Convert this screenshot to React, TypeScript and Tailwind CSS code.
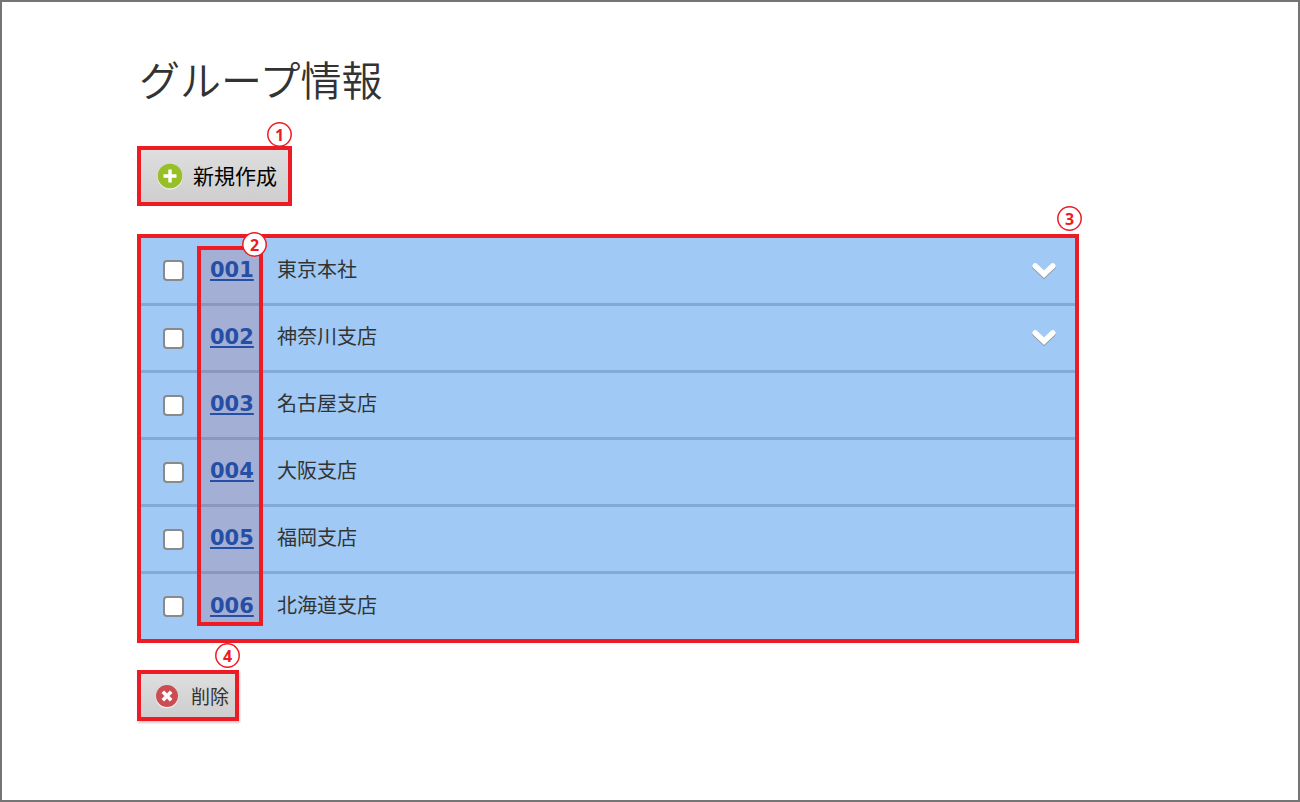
import React from 'react'

type Group = {
    code: string;
    name: string;
    hasChildren?: boolean;
}

const groups: Group[] = [
    { code: '001', name: '東京本社', hasChildren: true },
    { code: '002', name: '神奈川支店', hasChildren: true },
    { code: '003', name: '名古屋支店' },
    { code: '004', name: '大阪支店' },
    { code: '005', name: '福岡支店' },
    { code: '006', name: '北海道支店' },
]

type MarkerProps = {
    label: string;
    className: string;
}

function Marker({ label, className }: MarkerProps) {
    return (
        <span
            className={`absolute grid size-[25px] place-items-center font-['Open_Sans','Noto_Sans',sans-serif] text-base leading-none font-bold text-[#ed1c24] ${className}`}
        >
            <svg viewBox="0 0 25 25" className="col-start-1 row-start-1 size-[25px]" aria-hidden="true">
                <circle cx="12.5" cy="12.5" r="11.7" fill="#fff" stroke="#ed1c24" strokeWidth="1.5" />
            </svg>
            <span className="col-start-1 row-start-1">{label}</span>
        </span>
    )
}

function PlusIcon() {
    return (
        <svg viewBox="0 0 26 28" className="h-7 w-[26px]" aria-hidden="true">
            <circle cx="13" cy="15" r="12.5" fill="#f4f4f4" />
            <circle cx="13" cy="14" r="12.3" fill="#97bf26" />
            <path d="M13 7.5v13M6.5 14h13" stroke="#fff" strokeWidth="3.4" />
        </svg>
    )
}

function DeleteIcon() {
    return (
        <svg viewBox="0 0 24 26" className="h-[26px] w-6" aria-hidden="true">
            <circle cx="12" cy="14" r="11.3" fill="#f4f4f4" />
            <circle cx="12" cy="13" r="11" fill="#cb4d52" />
            <path d="M7.8 8.8l8.4 8.4M16.2 8.8l-8.4 8.4" stroke="#fff" strokeWidth="3.6" />
        </svg>
    )
}

function ChevronIcon() {
    return (
        <svg viewBox="0 0 24 18" className="h-[18px] w-6" aria-hidden="true">
            <path d="M3.3 5.3l8.7 8.2 8.7-8.2" fill="none" stroke="#8f9aa5" strokeWidth="5.6" strokeLinecap="round" />
            <path d="M3.3 4l8.7 8.2 8.7-8.2" fill="none" stroke="#fff" strokeWidth="5.6" strokeLinecap="round" />
        </svg>
    )
}

function GroupRow({ group }: { group: Group }) {
    return (
        <li className="flex h-[67px] items-center border-b-[3px] border-[#82aad9] pr-[19px] pl-[22px] first:h-[68px] last:h-[65px] last:border-b-0">
            <input
                type="checkbox"
                id={`group-${group.code}`}
                className="size-[21px] shrink-0 appearance-none rounded-sm border-2 border-[#8a8a8a] bg-white checked:bg-[#1c50a3]"
            />
            <a
                href={`#${group.code}`}
                className="ml-[26px] w-11 pb-0.5 font-['DejaVu_Sans',sans-serif] text-[21px] leading-6 font-bold text-[#0052b8] underline decoration-2 underline-offset-2"
            >
                {group.code}
            </a>
            <label htmlFor={`group-${group.code}`} className="ml-[23px] flex-1 pb-1 text-xl leading-7">
                {group.name}
            </label>
            {group.hasChildren && (
                <button type="button" aria-label={`${group.name}を開く`} className="cursor-pointer">
                    <ChevronIcon />
                </button>
            )}
        </li>
    )
}

export default function App() {
    return (
        <main className="min-h-screen border-2 border-[#757575] bg-white pt-[52px] pr-[219px] pb-16 pl-[135px] font-['Noto_Sans_CJK_JP','Noto_Sans',sans-serif] text-[#333]">
            <h1 className="pl-0.5 text-[41px] leading-[48px] font-[350]">グループ情報</h1>

            <div className="relative mt-11 w-fit">
                <button
                    type="button"
                    className="flex h-[60px] cursor-pointer items-center gap-2.5 border-4 border-[#ed1c24] bg-linear-to-b from-[#dedede] to-[#cecece] pr-[11px] pl-4 text-[21px] leading-7 text-black"
                >
                    <PlusIcon />
                    <span className="pb-0.5">新規作成</span>
                </button>
                <Marker label="1" className="-top-6 right-0" />
            </div>

            <section className="relative mt-7">
                <ul className="border-4 border-[#ed1c24] bg-[#a0caf5]">
                    {groups.map((group) => (
                        <GroupRow key={group.code} group={group} />
                    ))}
                </ul>
                {/* highlight over the code column */}
                <div className="pointer-events-none absolute top-3 bottom-[17px] left-[60px] w-[66px] border-4 border-[#ed1c24] bg-[#b4485a]/20" />
                <Marker label="2" className="-top-0.5 left-[105px]" />
                <Marker label="3" className="-top-7 -right-[3px]" />
            </section>

            <div className="relative mt-[27px] w-fit">
                <button
                    type="button"
                    className="flex h-[51px] cursor-pointer items-center gap-3 border-4 border-[#ed1c24] bg-linear-to-b from-[#dedede] to-[#cecece] pr-1.5 pl-3.5 text-[19px] leading-7 shadow-[1px_2px_2px_#0003]"
                >
                    <DeleteIcon />
                    削除
                </button>
                <Marker label="4" className="-top-[27px] -right-px" />
            </div>
        </main>
    )
}
